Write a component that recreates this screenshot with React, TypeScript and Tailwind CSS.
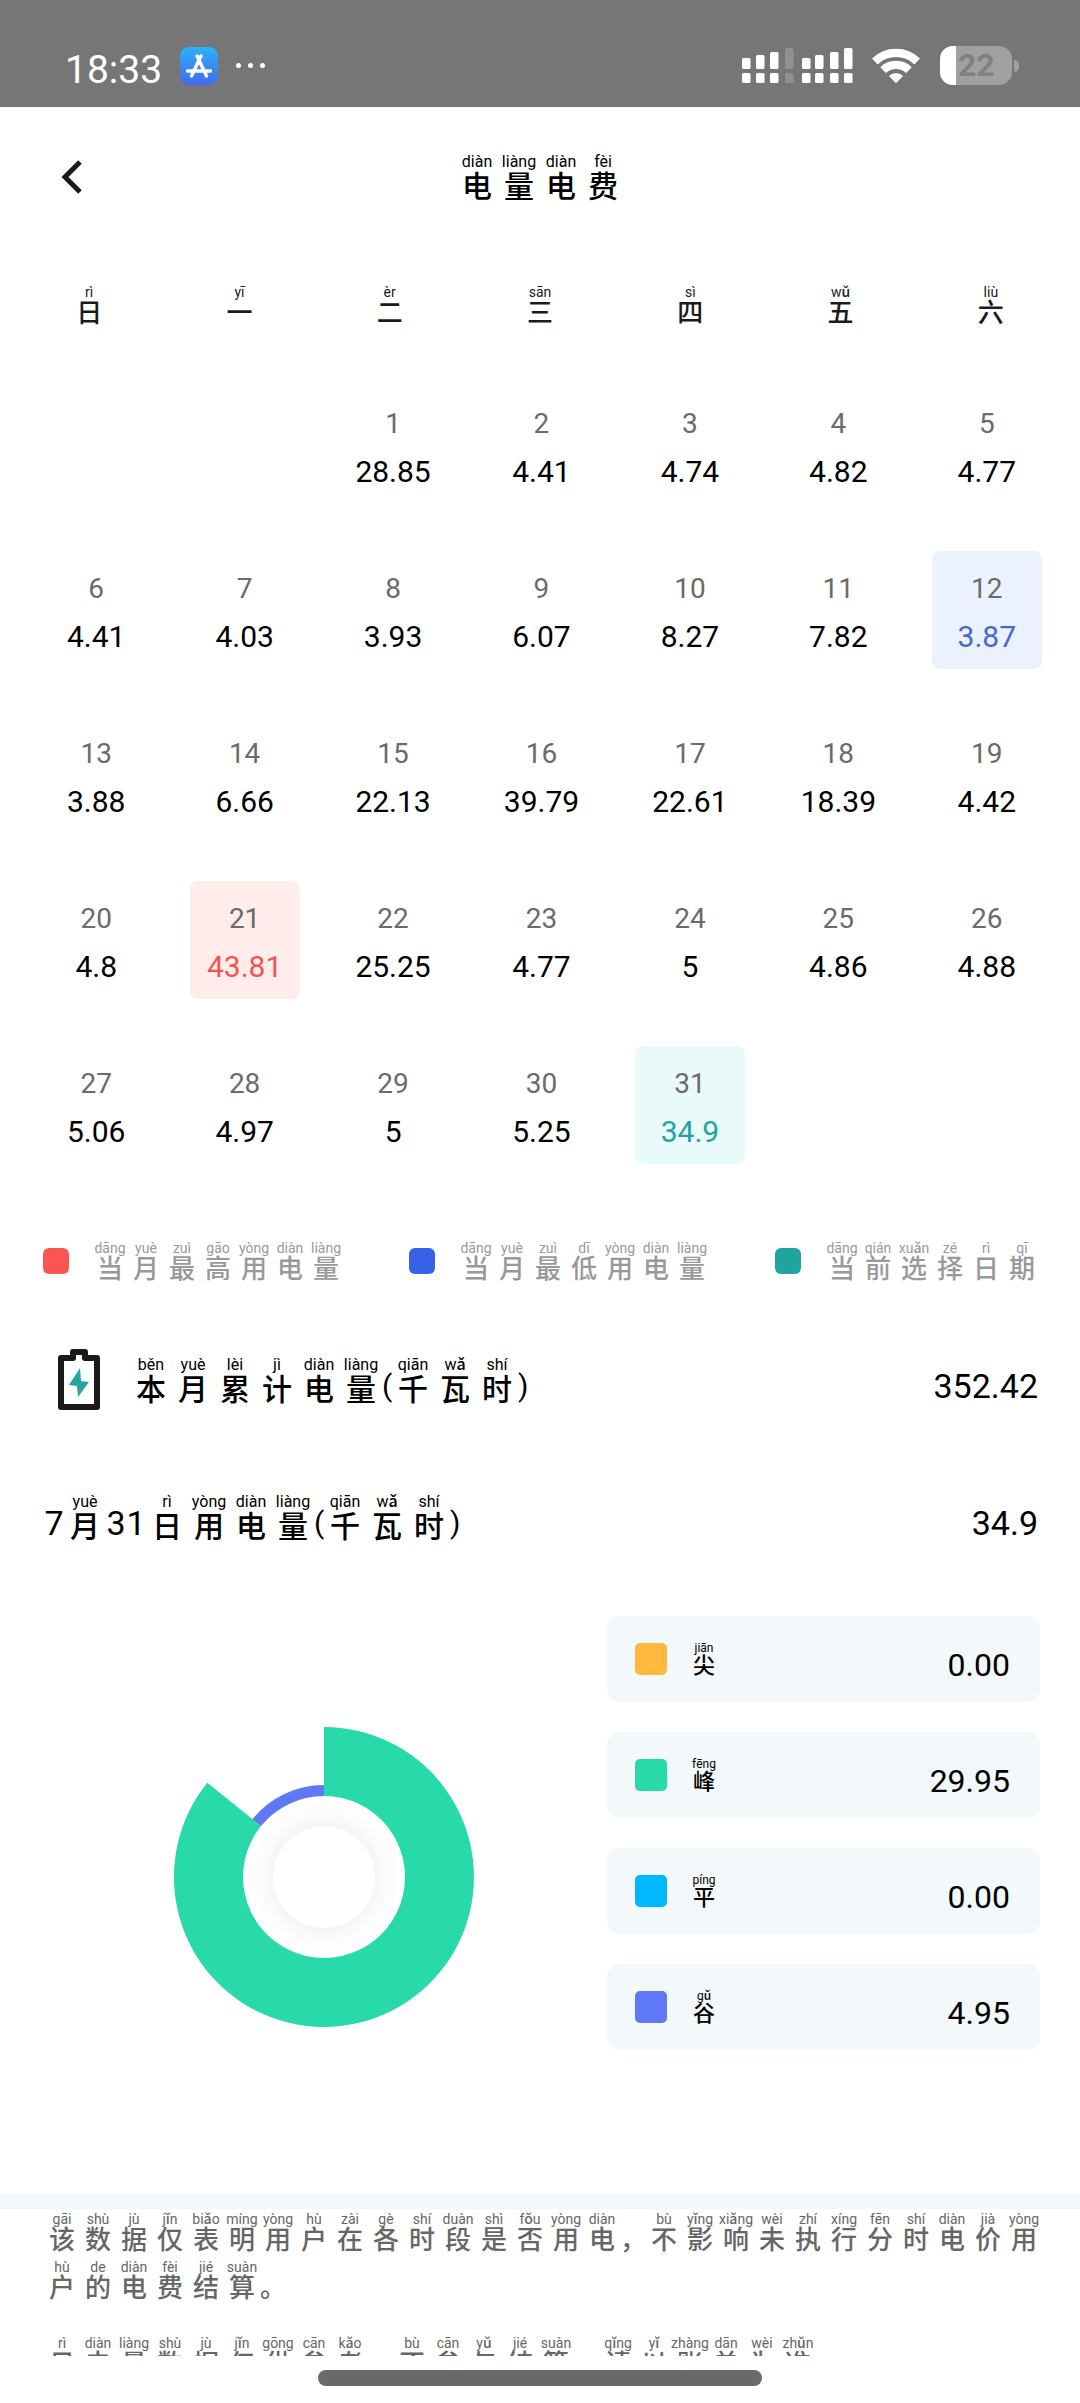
import clsx from "clsx";

const sizes = {
  sm: { cell: "w-9", pinyin: "text-[12px] leading-[14px]", hanzi: "text-[22px] leading-[22px]" },
  md: { cell: "w-9", pinyin: "text-[14px] leading-[16px]", hanzi: "text-[26px] leading-[26px]" },
  lg: { cell: "w-[42px]", pinyin: "text-[16px] leading-[20px]", hanzi: "text-[30px] leading-[30px]" },
};

// Each token is "hanzi:pinyin"; tokens without pinyin are digits or punctuation
function Pinyin({ text, size = "md", className }: { text: string; size?: "sm" | "md" | "lg"; className?: string }) {
  const s = sizes[size];
  return (
    <span className={clsx("flex items-end font-[450]", className)}>
      {text.split(" ").map((token, i) => {
        const [hanzi, pinyin] = token.split(":");
        if (!pinyin) {
          if (/\d/.test(hanzi)) {
            return <span key={i} className="w-5 pb-1 text-center text-[34px] leading-[30px]">{hanzi}</span>;
          }
          if (/[()]/.test(hanzi)) {
            return <span key={i} className={clsx("w-[10px] pb-1", s.hanzi)}>{hanzi}</span>;
          }
          return <span key={i} className={clsx("w-[26px]", s.hanzi)}>{hanzi}</span>;
        }
        return (
          <span key={i} className={clsx("flex flex-col items-center whitespace-nowrap", s.cell)}>
            <span className={s.pinyin}>{pinyin}</span>
            <span className={clsx("font-medium", s.hanzi)}>{hanzi}</span>
          </span>
        );
      })}
    </span>
  );
}

const weekdays = ["日:rì", "一:yī", "二:èr", "三:sān", "四:sì", "五:wǔ", "六:liù"];

const usage = [
  28.85, 4.41, 4.74, 4.82, 4.77, 4.41, 4.03, 3.93, 6.07, 8.27, 7.82, 3.87, 3.88, 6.66, 22.13, 39.79,
  22.61, 18.39, 4.42, 4.8, 43.81, 25.25, 4.77, 5, 4.86, 4.88, 5.06, 4.97, 5, 5.25, 34.9,
];

const marks: Record<number, { box: string; value: string }> = {
  12: { box: "bg-[#ebf2fe]", value: "text-[#4468cd]" },
  21: { box: "bg-[#ffeceb]", value: "text-[#ef5550]" },
  31: { box: "bg-[#e9fafa]", value: "text-[#22a39f]" },
};

const legend = [
  { color: "bg-[#fa5553]", text: "当:dāng 月:yuè 最:zuì 高:gāo 用:yòng 电:diàn 量:liàng" },
  { color: "bg-[#3762e8]", text: "当:dāng 月:yuè 最:zuì 低:dī 用:yòng 电:diàn 量:liàng" },
  { color: "bg-[#21a3a0]", text: "当:dāng 前:qián 选:xuǎn 择:zé 日:rì 期:qī" },
];

const periods = [
  { color: "bg-[#ffb93e]", text: "尖:jiān", value: "0.00" },
  { color: "bg-[#28d9a9]", text: "峰:fēng", value: "29.95" },
  { color: "bg-[#00b8ff]", text: "平:píng", value: "0.00" },
  { color: "bg-[#5f78f5]", text: "谷:gǔ", value: "4.95" },
];

const notices = [
  "该:gāi 数:shù 据:jù 仅:jǐn 表:biǎo 明:míng 用:yòng 户:hù 在:zài 各:gè 时:shí 段:duàn 是:shì 否:fǒu 用:yòng 电:diàn ， 不:bù 影:yǐng 响:xiǎng 未:wèi 执:zhí 行:xíng 分:fēn 时:shí 电:diàn 价:jià 用:yòng 户:hù 的:de 电:diàn 费:fèi 结:jié 算:suàn 。",
  "日:rì 电:diàn 量:liàng 数:shù 据:jù 仅:jǐn 供:gōng 参:cān 考:kǎo ， 不:bù 参:cān 与:yǔ 结:jié 算:suàn ， 请:qǐng 以:yǐ 账:zhàng 单:dān 为:wèi 准:zhǔn",
];

function SignalIcon() {
  const bars = [
    [0, 10], [14, 7], [28, 4], [43, 0], [60, 10], [73, 7], [88, 4], [102, 0],
  ];
  return (
    <svg width="111" height="36" viewBox="0 0 111 36" fill="white">
      {bars.map(([x, y], i) => (
        <g key={x} opacity={i === 3 ? 0.2 : 1}>
          <rect x={x} y={y} width="8.5" height={21 - y} rx="1.5" />
          <rect x={x} y="25" width="8.5" height="10" rx="1.5" />
        </g>
      ))}
    </svg>
  );
}

function StatusBar() {
  return (
    <div className="flex h-[107px] items-center bg-[#767676] pt-6 pr-[61px] pl-[65px] text-white">
      <span className="pt-2 text-[39px] leading-[40px]">18:33</span>
      <svg className="ml-[18px]" width="38" height="38" viewBox="0 0 38 38" fill="none">
        <defs>
          <linearGradient id="store" x1="0" y1="0" x2="0" y2="1">
            <stop offset="0" stopColor="#2cb4f6" />
            <stop offset="1" stopColor="#4468f0" />
          </linearGradient>
        </defs>
        <rect width="38" height="38" rx="9" fill="url(#store)" />
        <path d="M17 9L26.5 29M21 9L11.5 29M7.5 24H30.5" stroke="white" strokeWidth="3.4" strokeLinecap="round" />
      </svg>
      <div className="ml-[18px] flex gap-[7px]">
        <i className="size-[5px] rounded-full bg-white" />
        <i className="size-[5px] rounded-full bg-white" />
        <i className="size-[5px] rounded-full bg-white" />
      </div>
      <div className="ml-auto flex items-center">
        <SignalIcon />
        <svg className="ml-[19px]" width="48" height="36" viewBox="0 0 145 109" fill="none" stroke="white">
          <path d="M8.5 41A92 92 0 0 1 136.5 41" strokeWidth="25" />
          <path d="M33.5 67A56 56 0 0 1 111.5 67" strokeWidth="25" />
          <path d="M72.5 104L54 85A27 27 0 0 1 91 85Z" fill="white" strokeWidth="4" strokeLinejoin="round" />
        </svg>
        <div className="ml-5 flex h-[39px] w-[72px] items-center overflow-hidden rounded-[13px] bg-[#a0a0a0]">
          <span className="h-full w-4 bg-white" />
          <span className="pl-[2px] text-[32px] leading-[39px] font-bold text-[#808080]">22</span>
        </div>
        <span className="ml-[2px] h-3 w-[5px] rounded-r-full bg-[#a0a0a0]" />
      </div>
    </div>
  );
}

function Calendar() {
  return (
    <div className="mt-[60px] grid grid-cols-7 gap-y-[47px] pr-[19px] pl-[22px]">
      {usage.map((value, i) => {
        const day = i + 1;
        const mark = marks[day];
        return (
          <button
            key={day}
            type="button"
            className={clsx(
              "flex h-[118px] w-[110px] flex-col items-center justify-self-center rounded-lg pt-5",
              day === 1 && "col-start-3",
              mark?.box
            )}
          >
            <span className="text-[28px] leading-[36px] text-[#6b6b6b]">{day}</span>
            <span className={clsx("text-[30px] leading-[60px] font-[450]", mark ? mark.value : "text-black")}>{value}</span>
          </button>
        );
      })}
    </div>
  );
}

function UsageChart() {
  return (
    <svg width="300" height="300" viewBox="-150 -150 300 300">
      <defs>
        <radialGradient id="halo">
          <stop offset="0.63" stopColor="#f3f4f6" />
          <stop offset="0.75" stopColor="#fafafb" />
          <stop offset="1" stopColor="#ffffff" />
        </radialGradient>
      </defs>
      {/* peak hours */}
      <path d="M0 -150A150 150 0 1 1 -116.7 -94.3L-63 -50.9A81 81 0 1 0 0 -81Z" fill="#28d9a9" />
      {/* valley hours */}
      <path d="M-71.6 -57.8A92 92 0 0 1 0 -92V-81A81 81 0 0 0 -63 -50.9Z" fill="#5f78f5" />
      <circle r="80" fill="url(#halo)" />
      <circle r="51" fill="white" />
    </svg>
  );
}

export default function App() {
  return (
    <div className="min-h-screen bg-white font-['Roboto','Noto_Sans_CJK_SC',sans-serif] text-black">
      <StatusBar />

      <header className="grid grid-cols-[1fr_auto_1fr] items-center px-[61px] pt-[45px]">
        <button type="button" aria-label="返回" className="justify-self-start">
          <svg width="24" height="34" viewBox="0 0 24 34" fill="none" stroke="#1a1a1a" strokeWidth="5">
            <path d="M19 2L4 17L19 32" />
          </svg>
        </button>
        <h1>
          <Pinyin size="lg" text="电:diàn 量:liàng 电:diàn 费:fèi" />
        </h1>
      </header>

      <div className="mt-[82px] grid grid-cols-7 justify-items-center px-[14px] text-[#1a1a1a]">
        {weekdays.map((day) => (
          <Pinyin key={day} text={day} />
        ))}
      </div>

      <Calendar />

      <div className="mt-[76px] flex justify-between pr-10 pl-[43px] text-[#999]">
        {legend.map((item) => (
          <div key={item.color} className="flex items-center gap-[23px]">
            <span className={clsx("size-[26px] rounded-md", item.color)} />
            <Pinyin text={item.text} />
          </div>
        ))}
      </div>

      <div className="mt-[67px] flex items-center pr-[42px] pl-[58px]">
        <svg width="42" height="61" viewBox="0 0 42 61" fill="none">
          <path d="M3 9H15V3H27V9H39V58H3Z" stroke="#1a1a1a" strokeWidth="6" strokeLinejoin="round" />
          <path d="M22 19L11 36L19 37L20 48L31 33L23 32Z" fill="#28a5a0" />
        </svg>
        <Pinyin
          size="lg"
          className="ml-[30px]"
          text="本:běn 月:yuè 累:lèi 计:jì 电:diàn 量:liàng ( 千:qiān 瓦:wǎ 时:shí )"
        />
        <span className="ml-auto pt-3 text-[34px] leading-[38px] font-[450]">352.42</span>
      </div>

      <div className="mt-[82px] flex items-center pr-[42px] pl-11">
        <Pinyin size="lg" text="7 月:yuè 3 1 日:rì 用:yòng 电:diàn 量:liàng ( 千:qiān 瓦:wǎ 时:shí )" />
        <span className="ml-auto pt-3 text-[34px] leading-[38px] font-[450]">34.9</span>
      </div>

      <div className="mt-[74px] flex items-end px-10">
        <div className="flex flex-1 justify-center pb-[23px]">
          <UsageChart />
        </div>
        <ul className="flex w-[433px] flex-col gap-[30px]">
          {periods.map((p) => (
            <li key={p.text} className="flex h-[86px] items-center gap-[19px] rounded-xl bg-[#f3f8fb] pr-[30px] pl-7">
              <span className={clsx("size-8 rounded-[5px]", p.color)} />
              <Pinyin size="sm" text={p.text} />
              <span className="ml-auto pt-3 text-[32px] leading-[38px] font-[450]">{p.value}</span>
            </li>
          ))}
        </ul>
      </div>

      <div className="mt-36 h-[15px] bg-[#f4f8fb]" />

      <div className="flex h-[147px] flex-col gap-[34px] overflow-hidden pt-[2px] pr-9 pl-11 text-[#666]">
        {notices.map((text) => (
          <Pinyin key={text} className="shrink-0 flex-wrap gap-y-[6px]" text={text} />
        ))}
      </div>

      <div className="flex h-[47px] justify-center pt-[14px]">
        <span className="h-4 w-[444px] rounded-full bg-[#696969]" />
      </div>
    </div>
  );
}
